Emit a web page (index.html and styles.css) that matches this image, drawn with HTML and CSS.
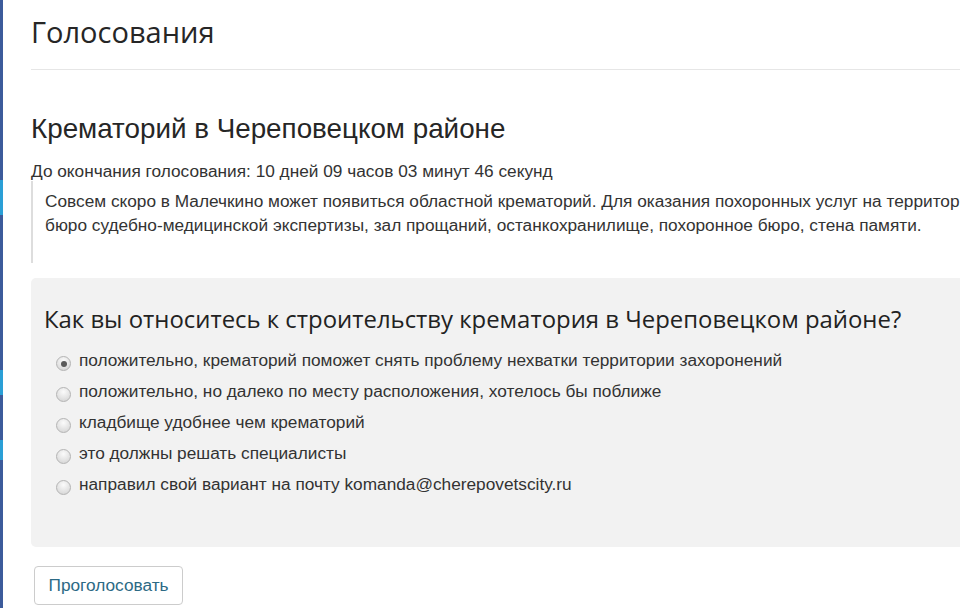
FILE: index.html
```html
<!DOCTYPE html>
<html lang="ru">
<head>
<meta charset="utf-8">
<link rel="stylesheet" href="styles.css">
</head>
<body>
<div class="edge"></div>
<main class="page">
  <h1 class="page-title">Голосования</h1>
  <hr class="rule">
  <h2 class="poll-title">Крематорий в Череповецком районе</h2>
  <p class="countdown">До окончания голосования: 10 дней 09 часов 03 минут 46 секунд</p>
  <blockquote class="intro">
    <p>Совсем скоро в Малечкино может появиться областной крематорий. Для оказания похоронных услуг на территории</p>
    <p>бюро судебно-медицинской экспертизы, зал прощаний, останкохранилище, похоронное бюро, стена памяти.</p>
  </blockquote>
  <form class="poll">
    <h3 class="question">Как вы относитесь к строительству крематория в Череповецком районе?</h3>
    <ul class="options">
      <li><span class="radio checked"></span><span class="label">положительно, крематорий поможет снять проблему нехватки территории захоронений</span></li>
      <li><span class="radio"></span><span class="label">положительно, но далеко по месту расположения, хотелось бы поближе</span></li>
      <li><span class="radio"></span><span class="label">кладбище удобнее чем крематорий</span></li>
      <li><span class="radio"></span><span class="label">это должны решать специалисты</span></li>
      <li><span class="radio"></span><span class="label">направил свой вариант на почту komanda@cherepovetscity.ru</span></li>
    </ul>
  </form>
  <button class="vote" type="button">Проголосовать</button>
</main>
</body>
</html>
```
FILE: styles.css
```css
html, body {
  margin: 0;
  padding: 0;
  background: #fff;
  overflow: hidden;
  height: 608px;
}
body {
  display: flex;
  font-family: "Liberation Sans", Arial, sans-serif;
  color: #333;
}
.edge {
  flex: 0 0 3px;
  height: 608px;
  background: linear-gradient(#3c5b9b 0, #3c5b9b 180px, #2a9fd6 180px, #2a9fd6 215px, #3c5b9b 215px, #3c5b9b 370px, #2a9fd6 370px, #2a9fd6 395px, #3c5b9b 395px, #3c5b9b 440px, #2a9fd6 440px, #2a9fd6 460px, #3c5b9b 460px);
}
.page {
  flex: 1;
  min-width: 0;
  padding-left: 28px;
  white-space: nowrap;
}
.page-title {
  margin: 12px 0 0;
  font-family: "Open Sans", sans-serif;
  font-weight: 400;
  font-size: 29px;
  line-height: 40px;
  color: #262626;
}
.rule {
  margin: 17px 0 0;
  border: 0;
  border-top: 1px solid #e6e6e6;
  width: 1000px;
}
.poll-title {
  margin: 43px 0 0;
  font-weight: 400;
  font-size: 27.8px;
  line-height: 32px;
  color: #262626;
}
.countdown {
  margin: 16px 0 0;
  font-size: 17.25px;
  line-height: 20px;
  color: #333;
}
.intro {
  margin: 0;
  padding: 8px 0 26px 12px;
  border-left: 2px solid #ddd;
}
.intro p {
  margin: 0;
  font-size: 17.25px;
  line-height: 24px;
  color: #333;
}
.poll {
  margin-top: 15px;
  background: #f2f2f2;
  border-radius: 5px 0 0 5px;
  padding: 26px 0 48px 13px;
  width: 1000px;
}
.question {
  margin: 0;
  font-family: "Open Sans", sans-serif;
  font-weight: 400;
  font-size: 23.9px;
  line-height: 30px;
  color: #222;
}
.options {
  list-style: none;
  margin: 10px 0 0;
  padding: 0 0 0 12px;
}
.options li {
  display: flex;
  align-items: center;
  height: 31px;
  font-size: 17.25px;
  color: #333;
}
.label {
  line-height: 20px;
}
.radio {
  align-self: flex-start;
  width: 15px;
  height: 15px;
  border-radius: 50%;
  border: 1px solid #b4b4b4;
  background: radial-gradient(circle at 50% 30%, #fbfbfb 0, #e4e4e4 55%, #d0d0d0 100%);
  margin: 12px 8px 0 0;
  box-sizing: border-box;
  flex: none;
  position: relative;
}
.radio.checked::after {
  content: "";
  position: absolute;
  left: 3.5px;
  top: 3.5px;
  width: 6px;
  height: 6px;
  border-radius: 50%;
  background: #5a5a5a;
}
.vote {
  margin: 19px 0 0 3px;
  height: 39px;
  padding: 0 13.5px;
  border: 1px solid #ccc;
  border-radius: 4px;
  background: #fff;
  font-family: "Liberation Sans", Arial, sans-serif;
  font-size: 17.25px;
  color: #2c6a85;
}
```
